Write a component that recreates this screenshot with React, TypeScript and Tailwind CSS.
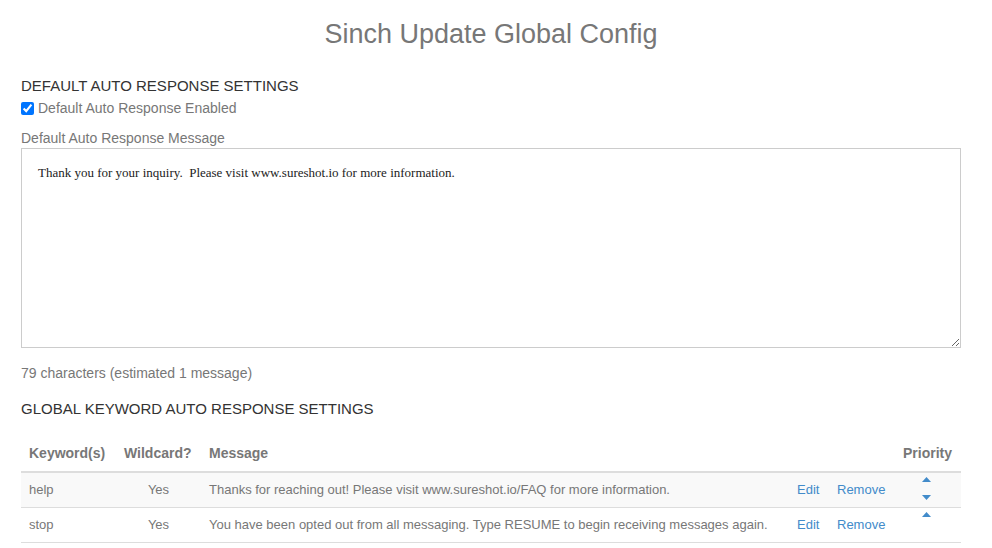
import React from "react";

const rows = [
  {
    keyword: "help",
    wildcard: "Yes",
    message: "Thanks for reaching out! Please visit www.sureshot.io/FAQ for more information.",
    up: true,
    down: true,
  },
  {
    keyword: "stop",
    wildcard: "Yes",
    message: "You have been opted out from all messaging. Type RESUME to begin receiving messages again.",
    up: true,
    down: false,
  },
];

function Caret({ dir }: { dir: "up" | "down" }) {
  return (
    <svg width="9" height="5" viewBox="0 0 9 5" className="block">
      {dir === "up" ? <path d="M0 5 L4.5 0 L9 5 Z" fill="#428bca" /> : <path d="M0 0 L4.5 5 L9 0 Z" fill="#428bca" />}
    </svg>
  );
}

export default function App() {
  return (
    <div className="min-h-screen bg-white font-['Liberation_Sans',Arial,sans-serif] text-[14px] text-[#333]">
      <div className="w-[940px] ml-[21px]">
        <h1 className="pt-[16px] text-center text-[27px] leading-[36px] text-[#777]">Sinch Update Global Config</h1>

        <h2 className="mt-[24px] text-[15px] leading-[20px] text-[#333]">DEFAULT AUTO RESPONSE SETTINGS</h2>
        <label className="mt-[2px] flex items-center gap-[4px] h-[20px] text-[#777]">
          <input type="checkbox" defaultChecked className="w-[13px] h-[13px] m-0 accent-[#0075ff]" />
          <span>Default Auto Response Enabled</span>
        </label>

        <div className="mt-[10px] leading-[20px] text-[#777]">Default Auto Response Message</div>
        <textarea
          className="block w-full h-[200px] border border-[#ccc] pl-[16px] pt-[16px] font-['Liberation_Serif','Times_New_Roman',serif] text-[13px] leading-[16px] text-[#222] outline-none"
          defaultValue="Thank you for your inquiry.  Please visit www.sureshot.io for more information."
        />

        <div className="mt-[15px] leading-[20px] text-[#777]">79 characters (estimated 1 message)</div>

        <h2 className="mt-[16px] text-[15px] leading-[20px] text-[#333]">GLOBAL KEYWORD AUTO RESPONSE SETTINGS</h2>

        <table className="mt-[16px] w-full table-fixed border-collapse text-[#777]">
          <colgroup>
            <col className="w-[95px]" />
            <col className="w-[85px]" />
            <col className="w-[588px]" />
            <col className="w-[40px]" />
            <col className="w-[66px]" />
            <col className="w-[66px]" />
          </colgroup>
          <thead>
            <tr className="border-b-2 border-[#ddd] text-left font-bold">
              <th className="px-[8px] py-[8px] leading-[20px]">Keyword(s)</th>
              <th className="px-[8px] py-[8px] leading-[20px]">Wildcard?</th>
              <th className="px-[8px] py-[8px] leading-[20px]">Message</th>
              <th className="px-[8px] py-[8px]"></th>
              <th className="px-[8px] py-[8px]"></th>
              <th className="px-[8px] py-[8px] leading-[20px]">Priority</th>
            </tr>
          </thead>
          <tbody className="text-[13px]">
            {rows.map((r, i) => (
              <tr key={r.keyword} className={`border-b border-[#ddd] ${i % 2 === 0 ? "bg-[#f9f9f9]" : "bg-white"}`}>
                <td className="px-[8px] h-[35px]">{r.keyword}</td>
                <td className="px-[8px] text-center">{r.wildcard}</td>
                <td className="px-[8px] whitespace-nowrap">{r.message}</td>
                <td className="px-[8px] text-[#428bca]">Edit</td>
                <td className="px-[8px] text-[#428bca]">Remove</td>
                <td className="pl-[8px] pr-[12px] align-top">
                  <div className="flex flex-col items-center pt-[4px] gap-[13px]">
                    {r.up && <Caret dir="up" />}
                    {r.down && <Caret dir="down" />}
                  </div>
                </td>
              </tr>
            ))}
          </tbody>
        </table>
      </div>
    </div>
  );
}
